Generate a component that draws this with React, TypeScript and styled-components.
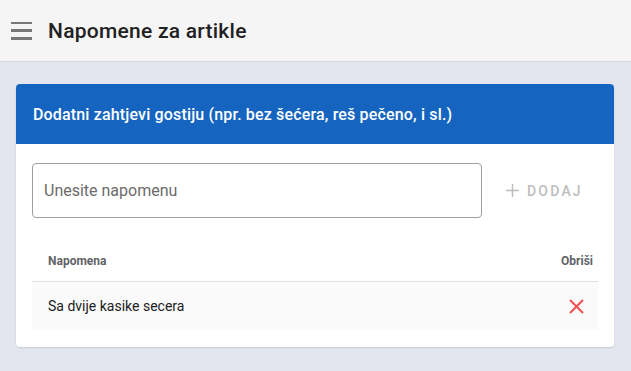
import styled, { createGlobalStyle } from "styled-components";

const GlobalStyle = createGlobalStyle`
  html, body {
    margin: 0;
    padding: 0;
    background: #e3e6ef;
    font-family: Roboto, "Liberation Sans", sans-serif;
  }
  * {
    box-sizing: border-box;
  }
`;

const Page = styled.div`
  min-height: 100vh;
  background: #e3e6ef;
`;

const TopBar = styled.header`
  height: 62px;
  display: flex;
  align-items: center;
  gap: 16px;
  padding-left: 11px;
  background: #f5f5f5;
  border-bottom: 1px solid #d6d9e2;
`;

const MenuButton = styled.button`
  width: 21px;
  height: 18px;
  padding: 0;
  border: none;
  background: none;
  display: flex;
  flex-direction: column;
  justify-content: space-between;
  cursor: pointer;
`;

const MenuLine = styled.span`
  display: block;
  height: 2.5px;
  background: #777;
`;

const Title = styled.h1`
  margin: 0;
  font-size: 21px;
  font-weight: 500;
  letter-spacing: 0.25px;
  color: #212121;
`;

const Main = styled.main`
  padding: 22px 17px 0 16px;
`;

const Card = styled.section`
  background: #fff;
  border-radius: 4px;
  box-shadow: 0 1px 2px rgba(0, 0, 0, 0.12);
  overflow: hidden;
`;

const CardHeader = styled.div`
  height: 60px;
  display: flex;
  align-items: center;
  padding-left: 17px;
  background: #1565c0;
  color: #fff;
  font-size: 16px;
  font-weight: 500;
  letter-spacing: 0.16px;
`;

const CardBody = styled.div`
  padding: 19px 16px 17px 16px;
`;

const InputRow = styled.div`
  display: flex;
  align-items: center;
  gap: 24px;
`;

const NoteInput = styled.input`
  width: 450px;
  height: 55px;
  padding: 0 11px;
  border: 1px solid #9e9e9e;
  border-radius: 4px;
  font-family: inherit;
  font-size: 16px;
  color: #212121;
  outline: none;
  &::placeholder {
    color: #6b6b6b;
  }
`;

const AddButton = styled.button`
  display: flex;
  align-items: center;
  gap: 8px;
  padding: 0;
  border: none;
  background: none;
  font-family: inherit;
  font-size: 14px;
  font-weight: 500;
  letter-spacing: 2.2px;
  color: #bdbdbd;
  text-transform: uppercase;
`;

const Table = styled.div`
  margin-top: 18px;
`;

const HeadRow = styled.div`
  height: 46px;
  display: flex;
  align-items: center;
  justify-content: space-between;
  padding: 4px 5px 0 16px;
  border-bottom: 1px solid #e0e0e0;
`;

const HeadCell = styled.span`
  font-size: 12px;
  font-weight: 700;
  color: #5f6368;
`;

const DataRow = styled.div`
  height: 48px;
  display: flex;
  align-items: center;
  justify-content: space-between;
  padding: 0 14px 0 16px;
  background: #fafafa;
  font-size: 14px;
  color: #212121;
`;

const DeleteButton = styled.button`
  width: 15px;
  height: 15px;
  padding: 0;
  border: none;
  background: none;
  display: flex;
  cursor: pointer;
`;

const notes = ["Sa dvije kasike secera"];

export default function App() {
  return (
    <Page>
      <GlobalStyle />
      <TopBar>
        <MenuButton aria-label="menu">
          <MenuLine />
          <MenuLine />
          <MenuLine />
        </MenuButton>
        <Title>Napomene za artikle</Title>
      </TopBar>
      <Main>
        <Card>
          <CardHeader>
            Dodatni zahtjevi gostiju (npr. bez šećera, reš pečeno, i sl.)
          </CardHeader>
          <CardBody>
            <InputRow>
              <NoteInput placeholder="Unesite napomenu" />
              <AddButton disabled>
                <svg width="13" height="13" viewBox="0 0 13 13">
                  <path d="M6.5 0v13M0 6.5h13" stroke="#bdbdbd" strokeWidth="1.5" />
                </svg>
                Dodaj
              </AddButton>
            </InputRow>
            <Table>
              <HeadRow>
                <HeadCell>Napomena</HeadCell>
                <HeadCell>Obriši</HeadCell>
              </HeadRow>
              {notes.map((n) => (
                <DataRow key={n}>
                  <span>{n}</span>
                  <DeleteButton aria-label="delete">
                    <svg width="15" height="15" viewBox="0 0 15 15">
                      <path
                        d="M1 1l13 13M14 1L1 14"
                        stroke="#f44f4f"
                        strokeWidth="2"
                      />
                    </svg>
                  </DeleteButton>
                </DataRow>
              ))}
            </Table>
          </CardBody>
        </Card>
      </Main>
    </Page>
  );
}
